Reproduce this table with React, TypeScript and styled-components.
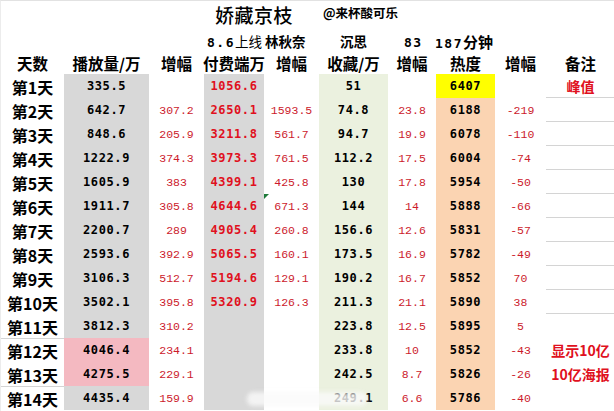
import React from 'react'
import styled, { createGlobalStyle } from 'styled-components'

const CJK = `"Noto Sans CJK SC", "Noto Sans", sans-serif`
const MONO = `"DejaVu Sans Mono", "Liberation Mono", monospace`
const THIN = `"Liberation Mono", "DejaVu Sans Mono", monospace`

const GlobalStyle = createGlobalStyle`
  body {
    margin: 0;
    background: #fff;
  }
`

const COLS = '63px 85px 55px 60px 55px 69px 48px 59px 51px 69px'

const C = {
  gray: '#d8d8d8',
  green: '#ebf1df',
  peach: '#fbd4b2',
  yellow: '#ffff00',
  pink: '#f4b9c1',
  red: '#cc1a2c',
  redBold: '#e01020',
  line: '#d4d4d4',
}

type Row = {
  play: string
  playUp: string
  paid: string
  paidUp: string
  fav: string
  favUp: string
  heat: string
  heatUp: string
  note?: string
}

const rows: Row[] = [
  { play: '335.5', playUp: '', paid: '1056.6', paidUp: '', fav: '51', favUp: '', heat: '6407', heatUp: '', note: '峰值' },
  { play: '642.7', playUp: '307.2', paid: '2650.1', paidUp: '1593.5', fav: '74.8', favUp: '23.8', heat: '6188', heatUp: '-219' },
  { play: '848.6', playUp: '205.9', paid: '3211.8', paidUp: '561.7', fav: '94.7', favUp: '19.9', heat: '6078', heatUp: '-110' },
  { play: '1222.9', playUp: '374.3', paid: '3973.3', paidUp: '761.5', fav: '112.2', favUp: '17.5', heat: '6004', heatUp: '-74' },
  { play: '1605.9', playUp: '383', paid: '4399.1', paidUp: '425.8', fav: '130', favUp: '17.8', heat: '5954', heatUp: '-50' },
  { play: '1911.7', playUp: '305.8', paid: '4644.6', paidUp: '671.3', fav: '144', favUp: '14', heat: '5888', heatUp: '-66' },
  { play: '2200.7', playUp: '289', paid: '4905.4', paidUp: '260.8', fav: '156.6', favUp: '12.6', heat: '5831', heatUp: '-57' },
  { play: '2593.6', playUp: '392.9', paid: '5065.5', paidUp: '160.1', fav: '173.5', favUp: '16.9', heat: '5782', heatUp: '-49' },
  { play: '3106.3', playUp: '512.7', paid: '5194.6', paidUp: '129.1', fav: '190.2', favUp: '16.7', heat: '5852', heatUp: '70' },
  { play: '3502.1', playUp: '395.8', paid: '5320.9', paidUp: '126.3', fav: '211.3', favUp: '21.1', heat: '5890', heatUp: '38' },
  { play: '3812.3', playUp: '310.2', paid: '', paidUp: '', fav: '223.8', favUp: '12.5', heat: '5895', heatUp: '5' },
  { play: '4046.4', playUp: '234.1', paid: '', paidUp: '', fav: '233.8', favUp: '10', heat: '5852', heatUp: '-43', note: '显示10亿' },
  { play: '4275.5', playUp: '229.1', paid: '', paidUp: '', fav: '242.5', favUp: '8.7', heat: '5826', heatUp: '-26', note: '10亿海报' },
  { play: '4435.4', playUp: '159.9', paid: '', paidUp: '', fav: '249.1', favUp: '6.6', heat: '5786', heatUp: '-40' },
]

const headers = ['天数', '播放量/万', '增幅', '付费端万', '增幅', '收藏/万', '增幅', '热度', '增幅', '备注']

function App() {
  return (
    <Page>
      <GlobalStyle />
      <TitleRow>
        <Title>娇藏京枝</Title>
        <Author>@来杯酸可乐</Author>
      </TitleRow>
      <InfoRow>
        <InfoItem $w={133}>
          <Num>8.6</Num>
          <Light>上线</Light> 林秋奈
        </InfoItem>
        <InfoItem $w={64}>沉思</InfoItem>
        <InfoItem $w={31}>
          <Num>83</Num>
        </InfoItem>
        <InfoItem $w={80} $big>
          <Num>187</Num>分钟
        </InfoItem>
      </InfoRow>
      <Table>
        {headers.map((h, i) => (
          <HeadCell key={i}>{h}</HeadCell>
        ))}
        {rows.map((r, i) => {
          const n = i + 1
          const pink = n === 12 || n === 13
          return (
            <React.Fragment key={n}>
              <DayCell $boxed={n === 12 || n === 14}>第{n}天</DayCell>
              <ValueCell $bg={pink ? C.pink : C.gray}>{r.play}</ValueCell>
              <DeltaCell>{r.playUp}</DeltaCell>
              <PaidCell>{r.paid}</PaidCell>
              <DeltaCell>
                {n === 6 && <Flag />}
                {r.paidUp}
              </DeltaCell>
              <ValueCell $bg={C.green}>{r.fav}</ValueCell>
              <DeltaCell>{r.favUp}</DeltaCell>
              <ValueCell $bg={n === 1 ? C.yellow : C.peach}>{r.heat}</ValueCell>
              <DeltaCell>{r.heatUp}</DeltaCell>
              <NoteCell $ruled={n <= 10}>{r.note}</NoteCell>
            </React.Fragment>
          )
        })}
      </Table>
      <Watermark />
    </Page>
  )
}

export default App

const Page = styled.main`
  position: relative;
  width: 614px;
  height: 411px;
  box-sizing: border-box;
  border-top: 1px solid #e2e2e2;
  border-left: 1px solid #ececec;
  overflow: hidden;
  font-family: ${CJK};
  color: #000;
`

const TitleRow = styled.div`
  height: 27px;
  display: flex;
  align-items: center;
  padding-left: 214px;
  gap: 30px;
`

const Title = styled.span`
  font-size: 19px;
  font-weight: 500;
  letter-spacing: 0.5px;
`

const Author = styled.span`
  font-size: 12.5px;
  font-weight: 700;
  margin-top: -4px;
`

const InfoRow = styled.div`
  height: 22px;
  display: flex;
  align-items: center;
  padding-left: 206px;
  padding-top: 2px;
`

const InfoItem = styled.span<{ $w: number; $big?: boolean }>`
  width: ${(p) => p.$w}px;
  flex: none;
  font-size: ${(p) => (p.$big ? 15 : 13.5)}px;
  font-weight: 700;
  white-space: nowrap;
`

const Num = styled.span`
  font-family: ${MONO};
  font-size: 13px;
  letter-spacing: 1.5px;
`

const Light = styled.span`
  font-weight: 400;
`

const Table = styled.div`
  display: grid;
  grid-template-columns: ${COLS};
  grid-template-rows: 22px;
  grid-auto-rows: 24px;
`

const HeadCell = styled.div`
  display: flex;
  align-items: center;
  justify-content: center;
  font-size: 15.5px;
  font-weight: 700;
  white-space: nowrap;
`

const DayCell = styled.div<{ $boxed?: boolean }>`
  display: flex;
  align-items: center;
  justify-content: center;
  font-size: 16px;
  font-weight: 700;
  box-sizing: border-box;
  border-top: 1px solid ${(p) => (p.$boxed ? C.line : 'transparent')};
`

const ValueCell = styled.div<{ $bg: string }>`
  display: flex;
  align-items: center;
  justify-content: center;
  background: ${(p) => p.$bg};
  font-family: ${MONO};
  font-size: 12px;
  font-weight: 700;
  letter-spacing: 0.6px;
`

const PaidCell = styled(ValueCell).attrs({ $bg: C.gray })`
  color: ${C.redBold};
`

const DeltaCell = styled.div`
  position: relative;
  display: flex;
  align-items: center;
  justify-content: center;
  font-family: ${THIN};
  font-size: 11.5px;
  color: ${C.red};
`

const Flag = styled.i`
  position: absolute;
  left: 0;
  top: 0;
  width: 0;
  height: 0;
  border-top: 5px solid #1e7b3a;
  border-right: 5px solid transparent;
`

const NoteCell = styled.div<{ $ruled?: boolean }>`
  display: flex;
  align-items: center;
  justify-content: center;
  box-sizing: border-box;
  border-bottom: 1px solid ${(p) => (p.$ruled ? C.line : 'transparent')};
  color: ${C.redBold};
  font-size: 14px;
  font-weight: 700;
  white-space: nowrap;
`

const Watermark = styled.div`
  position: absolute;
  left: 246px;
  top: 391px;
  width: 120px;
  height: 14px;
  background: rgba(250, 250, 250, 0.8);
  filter: blur(2px);
  border-radius: 6px;
`
